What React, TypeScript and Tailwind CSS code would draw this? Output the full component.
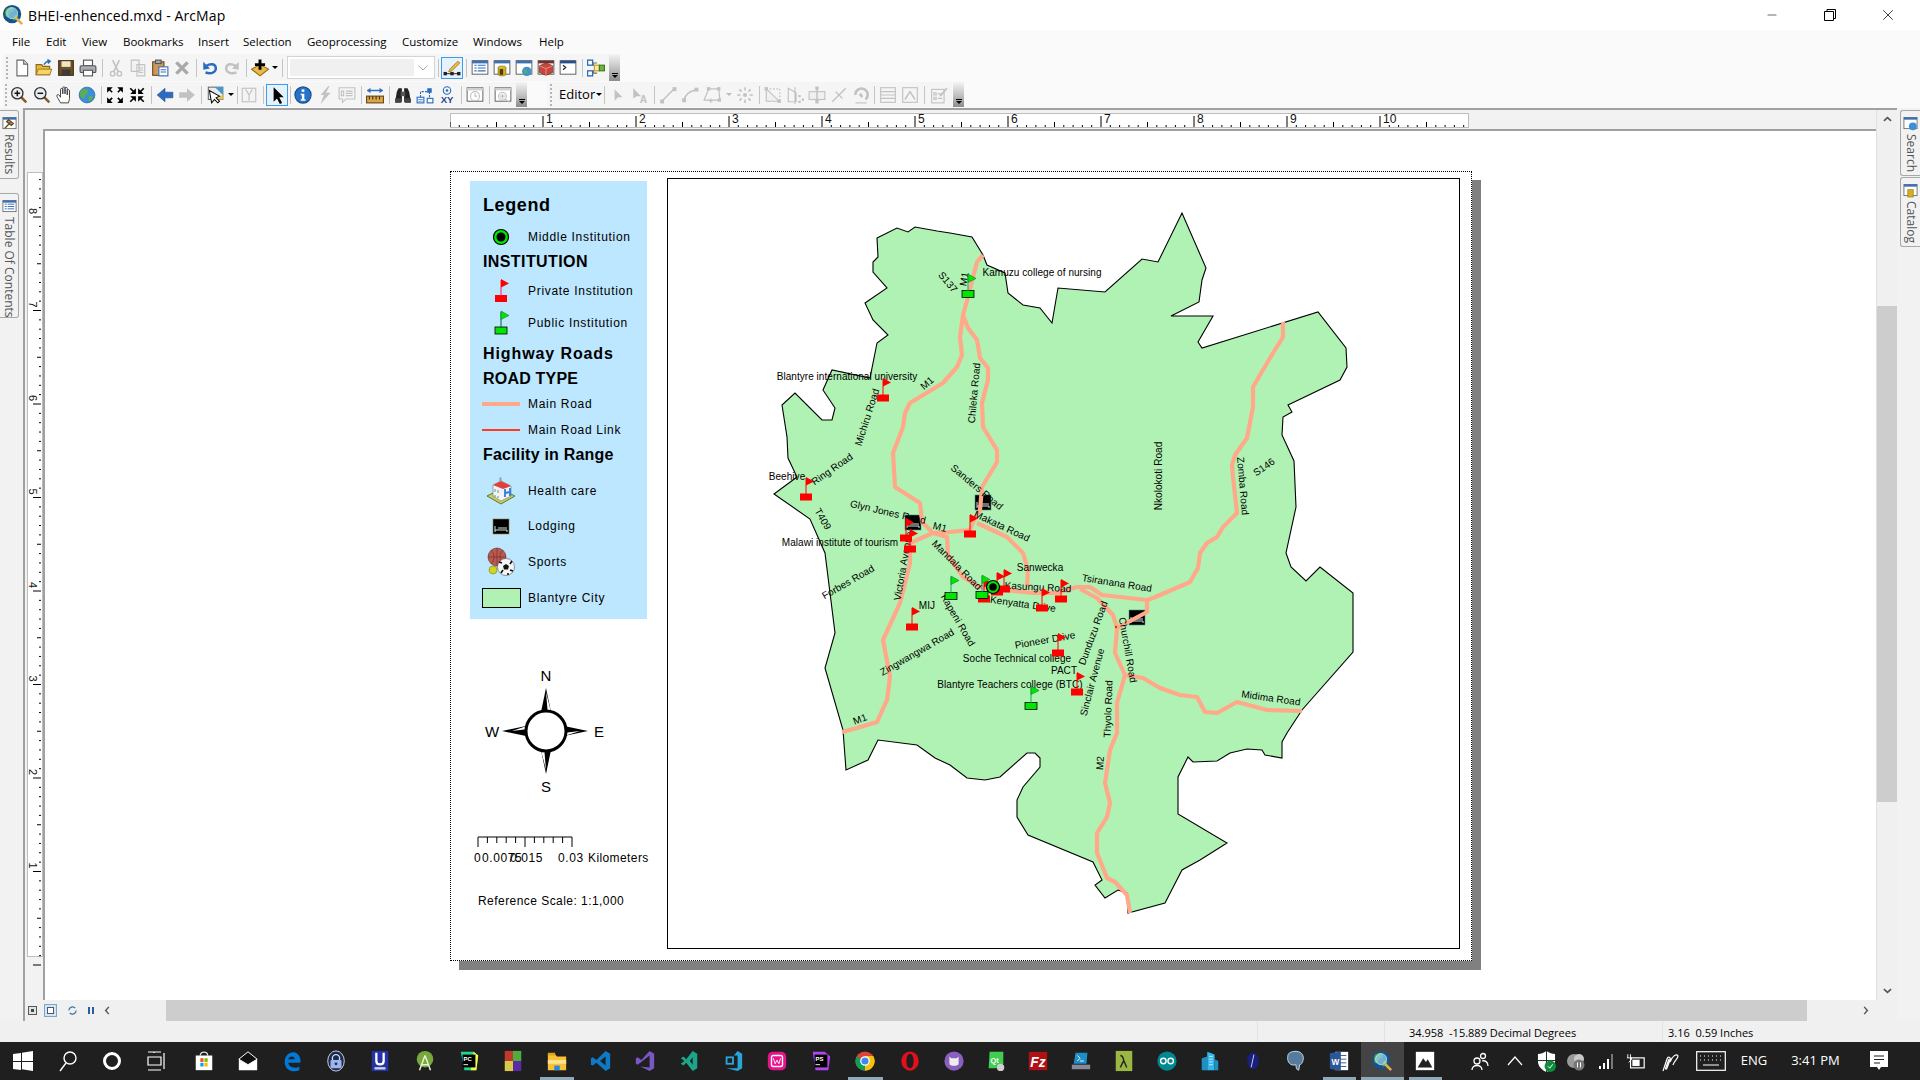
import type { ReactNode } from "react";
import { Minus, X } from "lucide-react";

const LIB = "font-['Liberation_Sans',sans-serif]";

// ---------- toolbar bits ----------
const Grip = ({ w }: { w: string }) => (
  <div className={`${w} flex flex-col items-center justify-center gap-[2px]`}>
    {[0, 1, 2, 3, 4, 5].map((i) => (
      <div key={i} className="w-[2px] h-[2px] bg-[#b4b4b4]" />
    ))}
  </div>
);

const Sep = ({ w = "w-[6px]" }: { w?: string }) => (
  <div className={`${w} h-full flex justify-center items-center`}>
    <div className="w-px h-[18px] bg-[#c4c4c4]" />
  </div>
);

const Overflow = () => (
  <div className="w-[11px] h-full bg-linear-to-b from-[#f4f4f4] via-[#c4c4c4] to-[#8c8c8c] flex flex-col items-center justify-end pb-[3px] gap-px">
    <div className="w-[6px] h-px bg-black" />
    <div className="w-0 h-0 border-x-[3px] border-x-transparent border-t-[3px] border-t-black" />
  </div>
);

const Caret = ({ c = "#000", w = "w-[10px]" }: { c?: string; w?: string }) => (
  <div className={`${w} flex justify-center`}>
    <div className="w-0 h-0 border-x-[3px] border-x-transparent border-t-[3px]" style={{ borderTopColor: c }} />
  </div>
);

const Btn = ({ children, on }: { children: ReactNode; on?: boolean }) => (
  <div
    className={`w-[22px] h-[22px] flex items-center justify-center shrink-0 ${
      on ? "border border-[#3c9bea] bg-[#e6f2fb]" : ""
    }`}
  >
    <svg viewBox="0 0 16 16" className="w-[18px] h-[18px]">
      {children}
    </svg>
  </div>
);

const G = "#c2c2c2";

const Win = ({ children, bar = "#3d6fb4" }: { children?: ReactNode; bar?: string }) => (
  <>
    <rect x="1" y="1.5" width="14" height="12" fill="#fff" stroke="#555" strokeWidth="0.8" />
    <rect x="1" y="1.5" width="14" height="2.4" fill={bar} />
    {children}
  </>
);

const Lens = ({ sign }: { sign: "+" | "-" }) => (
  <>
    <line x1="10" y1="10" x2="14.5" y2="14.5" stroke="#8a5a2c" strokeWidth="2.2" />
    <circle cx="6.5" cy="6.5" r="5" fill="#e9eef3" stroke="#333" strokeWidth="1.2" />
    <path d={sign === "+" ? "M4 6.5h5M6.5 4v5" : "M4 6.5h5"} stroke="#111" strokeWidth="1.3" />
  </>
);

// ---------- map symbols ----------
const FLAG_R = "#ff0000";
const FLAG_G = "#00e600";

const Flag = ({ x, y, c = FLAG_R }: { x: number; y: number; c?: string }) => {
  const stroke = c === FLAG_G ? "#000" : "#ff0000";
  return (
    <g>
      <rect x={x - 6} y={y - 3.5} width="12" height="7" fill={c} stroke={c === FLAG_G ? "#000" : "none"} strokeWidth="0.8" />
      <line x1={x} y1={y - 3} x2={x} y2={y - 19} stroke={c === FLAG_G ? "#1a6" : stroke} strokeWidth="1" />
      <path d={`M${x} ${y - 20}L${x + 8} ${y - 15.5}L${x} ${y - 11.5}Z`} fill={c} stroke={c === FLAG_G ? "#063" : "none"} strokeWidth="0.5" />
    </g>
  );
};

const Lodging = ({ x, y }: { x: number; y: number }) => (
  <g>
    <rect x={x - 8} y={y - 8} width="16" height="15" fill="#000" stroke="#4f8f8f" strokeWidth="0.6" />
    <path d={`M${x - 6} ${y - 1}v6M${x - 6} ${y + 3}h12v2M${x - 3} ${y + 1}h9`} stroke="#cfe8e0" strokeWidth="1" fill="none" />
  </g>
);

const CITY =
  "877,238 897,228 908,232 915,227 937,231 950,233 972,237 983,255 987,265 1005,273 1008,293 1023,305 1040,308 1052,323 1058,288 1105,292 1142,259 1158,262 1182,213 1206,268 1202,280 1199,302 1171,316 1213,316 1198,342 1202,348 1318,312 1346,348 1347,367 1340,380 1288,405 1292,412 1283,417 1282,435 1294,461 1296,507 1286,553 1291,567 1306,581 1320,567 1353,593 1353,652 1302,710 1287,733 1282,742 1282,758 1265,755 1262,750 1247,749 1230,753 1217,761 1193,762 1188,757 1178,777 1178,814 1227,843 1200,860 1182,870 1165,903 1128,913 1127,893 1118,890 1105,898 1095,885 1102,880 1093,862 1028,835 1017,817 1017,800 1023,787 1040,767 1040,758 1035,753 1027,753 1000,777 985,780 967,778 950,765 935,758 917,745 878,740 868,760 846,770 843,730 825,668 835,633 825,553 810,519 774,494 797,477 788,458 787,437 782,405 795,393 822,420 832,420 835,408 823,390 832,370 870,378 877,343 888,335 873,320 865,303 887,288 873,272 873,262 878,257";

const ROADS = [
  "983,255 977,262 973,277 968,297 963,315 960,337 962,355 957,367 943,383 910,403 905,413 903,427 893,453 895,487 920,503 922,522 933,533 910,543 910,563 900,603 883,640 890,677 887,700 877,722 857,728 842,732",
  "963,315 968,328 977,340 980,358 988,368 988,380 982,403 983,427 997,450 997,462 982,487 980,510 973,522 970,530 950,532 933,533",
  "977,523 1007,537 1023,553 1028,570 1027,587",
  "933,533 947,537 948,555 963,577 980,587 1033,593 1057,593 1077,587 1090,587 1102,595 1147,600 1153,598 1190,582 1198,568 1200,553 1207,543 1217,537 1223,527 1237,513 1233,477 1232,465 1235,455 1247,438 1253,407 1253,387 1273,353 1283,337 1283,322",
  "1147,600 1147,612 1117,628",
  "1080,589 1097,598 1113,615 1117,628 1115,653 1125,675 1143,678 1160,688 1180,695 1197,697 1205,712 1217,713 1237,702 1267,710 1302,711",
  "1125,675 1117,703 1117,733 1110,750 1105,783 1110,803 1107,817 1097,833 1097,853 1107,878 1115,882 1127,895 1130,913",
];

const LABELS: [string, number, number, number][] = [
  ["Kamuzu college of nursing", 1042, 272, 0],
  ["S137", 948, 282, 50],
  ["M1", 964, 279, -80],
  ["Blantyre international university", 847, 376, 0],
  ["M1", 927, 383, -40],
  ["Michiru Road", 867, 417, -72],
  ["Chileka Road", 974, 393, -85],
  ["Beehive", 787, 476, 0],
  ["Ring Road", 832, 469, -35],
  ["T409", 823, 519, 60],
  ["Glyn Jones Road", 888, 512, 13],
  ["M1", 940, 527, 15],
  ["Sanders Road", 977, 487, 40],
  ["Makata Road", 1002, 526, 25],
  ["Malawi institute of tourism", 840, 542, 0],
  ["Forbes Road", 848, 582, -30],
  ["Victoria Avenue", 903, 566, -80],
  ["Mandala Road", 957, 565, 45],
  ["MIJ", 927, 605, 0],
  ["Sanwecka", 1040, 567, 0],
  ["Kasungu Road", 1038, 587, 3],
  ["Kenyatta Drive", 1023, 604, 8],
  ["Tsiranana Road", 1117, 583, 9],
  ["Kapeni Road", 958, 620, 60],
  ["Zingwangwa Road", 917, 652, -30],
  ["Pioneer Drive", 1045, 640, -10],
  ["Soche Technical college", 1017, 658, 0],
  ["PACT", 1064, 670, 0],
  ["Blantyre Teachers college (BTC)", 1010, 684, 0],
  ["Dunduzu Road", 1093, 633, -70],
  ["Sinclair Avenue", 1092, 682, -75],
  ["Churchill Road", 1128, 650, 80],
  ["Thyolo Road", 1108, 709, -88],
  ["M1", 860, 719, -20],
  ["M2", 1100, 763, -85],
  ["Midima Road", 1271, 698, 8],
  ["Zomba Road", 1243, 486, 85],
  ["S146", 1264, 467, -35],
  ["Nkolokoti Road", 1158, 476, -90],
];

const RED_FLAGS = [
  [883, 398], [806, 497], [970, 534], [906, 538], [910, 549], [912, 627], [984, 599], [1004, 589],
  [997, 592], [1042, 608], [1061, 599], [1058, 653], [1077, 692],
];
const GREEN_FLAGS = [[968, 294], [951, 596], [982, 595], [1031, 706]];

const CityMap = () => (
  <svg viewBox="668 179 791 769" className={`w-[791px] h-[769px] block ${LIB}`}>
    <polygon points={CITY} fill="#b0f2b3" stroke="#000" strokeWidth="1.1" />
    <Lodging x={983} y={503} />
    <Lodging x={913} y={523} />
    <Lodging x={1137} y={618} />
    {ROADS.map((r, i) => (
      <polyline key={i} points={r} fill="none" stroke="#ffa98a" strokeWidth="4.2" strokeLinejoin="round" />
    ))}
    <circle cx="1116" cy="627" r="1.2" fill="#ff2a00" />
    {LABELS.map(([t, x, y, a], i) => (
      <text
        key={i}
        x={x}
        y={y + 3.5}
        fontSize="10"
        letterSpacing="0.05"
        textAnchor="middle"
        fill="#000"
        transform={a ? `rotate(${a} ${x} ${y})` : undefined}
      >
        {t}
      </text>
    ))}
    {RED_FLAGS.map(([x, y], i) => (
      <Flag key={i} x={x} y={y} />
    ))}
    {GREEN_FLAGS.map(([x, y], i) => (
      <Flag key={i} x={x} y={y} c={FLAG_G} />
    ))}
    <circle cx="993" cy="587" r="6.5" fill="#00e600" stroke="#000" strokeWidth="1.2" />
    <circle cx="993" cy="587" r="3.8" fill="#000" />
  </svg>
);

// ---------- legend ----------
const SmallIcon = ({ children }: { children: ReactNode }) => (
  <svg viewBox="0 0 30 30" className="w-[30px] h-[30px] overflow-visible">
    {children}
  </svg>
);

const legendRows: { label: string; cls: string; mt: string; wide?: boolean; icon?: ReactNode }[] = [
  { label: "Legend", cls: "text-[18px] font-bold tracking-[0.6px]", mt: "mt-0" },
  {
    label: "Middle Institution",
    cls: "",
    mt: "mt-[12px]",
    icon: (
      <SmallIcon>
        <circle cx="15" cy="15" r="7.5" fill="#00e600" stroke="#000" strokeWidth="1.2" />
        <circle cx="15" cy="15" r="4.5" fill="#000" />
      </SmallIcon>
    ),
  },
  { label: "INSTITUTION", cls: "text-[16px] font-bold tracking-[0.4px]", mt: "mt-[5px]" },
  {
    label: "Private Institution",
    cls: "",
    mt: "mt-[9px]",
    icon: (
      <SmallIcon>
        <rect x="9" y="19" width="12" height="7" fill={FLAG_R} />
        <line x1="15" y1="20" x2="15" y2="4" stroke="#ff2050" strokeWidth="1" />
        <path d="M15 3l8 4.5-8 4z" fill={FLAG_R} />
      </SmallIcon>
    ),
  },
  {
    label: "Public Institution",
    cls: "",
    mt: "mt-[12px]",
    icon: (
      <SmallIcon>
        <rect x="9" y="19" width="12" height="7" fill={FLAG_G} stroke="#000" strokeWidth="0.8" />
        <line x1="15" y1="20" x2="15" y2="4" stroke="#063" strokeWidth="1" />
        <path d="M15 3l8 4.5-8 4z" fill={FLAG_G} stroke="#063" strokeWidth="0.5" />
      </SmallIcon>
    ),
  },
  { label: "Highway Roads", cls: "text-[16px] font-bold tracking-[0.9px]", mt: "mt-[11px]" },
  { label: "ROAD TYPE", cls: "text-[16px] font-bold tracking-[0.2px]", mt: "mt-[5px]" },
  {
    label: "Main Road",
    cls: "",
    mt: "mt-[5px]",
    wide: true,
    icon: <div className="w-[38px] h-[4px] -ml-[1px] bg-[#ffa98a]" />,
  },
  {
    label: "Main Road Link",
    cls: "",
    mt: "mt-[6px]",
    wide: true,
    icon: <div className="w-[38px] h-[2px] -ml-[1px] bg-[#ff3a1e]" />,
  },
  { label: "Facility in Range", cls: "text-[16px] font-bold tracking-[0.2px]", mt: "mt-[5px]" },
  {
    label: "Health care",
    cls: "",
    mt: "mt-[16px]",
    icon: (
      <SmallIcon>
        <path d="M1 20l14-7 14 7-14 8z" fill="#c6cf5a" stroke="#4a5a20" strokeWidth="0.8" />
        <path d="M7 9l8-4 10 5v10l-10 5-8-5z" fill="#f3f3f3" stroke="#777" strokeWidth="0.6" />
        <path d="M7 9l8-4 10 5-8 3z" fill="#e04040" />
        <path d="M19 13v8M24 12v8M19 17l5-1" stroke="#2a7fe0" strokeWidth="1.8" />
        <path d="M9 13v3M12 14v3M9 19v2M12 20v2" stroke="#6aa" strokeWidth="1.2" />
        <rect x="13.5" y="1.5" width="2" height="4" fill="#999" />
      </SmallIcon>
    ),
  },
  {
    label: "Lodging",
    cls: "",
    mt: "mt-[15px]",
    icon: (
      <SmallIcon>
        <rect x="7" y="8" width="16" height="15" fill="#000" stroke="#9a7a3a" strokeWidth="0.6" />
        <path d="M9 15v6M9 19h12v2M12 17h9" stroke="#cfe8e0" strokeWidth="1" fill="none" />
      </SmallIcon>
    ),
  },
  {
    label: "Sports",
    cls: "",
    mt: "mt-[16px]",
    icon: (
      <SmallIcon>
        <circle cx="11" cy="10" r="9" fill="#b85a50" stroke="#6a2a28" strokeWidth="0.6" />
        <path d="M2 10h18M11 1v18M5 3c4 4 4 10 0 14M17 3c-4 4-4 10 0 14" stroke="#6a2a28" strokeWidth="0.6" fill="none" />
        <circle cx="7" cy="23" r="4" fill="#c9d820" stroke="#7a8510" strokeWidth="0.6" />
        <circle cx="20" cy="20" r="8.5" fill="#f5f5f5" stroke="#555" strokeWidth="0.6" />
        <path d="M20 17l3 2-1 3.5h-4L17 19z" fill="#111" />
        <path d="M13 15l3 1M26 14l-2 3M27 24l-3-1M15 26l2-3M22 28v-2" stroke="#111" strokeWidth="1.6" />
      </SmallIcon>
    ),
  },
  {
    label: "Blantyre City",
    cls: "",
    mt: "mt-[16px]",
    wide: true,
    icon: <div className="w-[39px] h-[20px] -ml-[1px] bg-[#b0f2b3] border border-black" />,
  },
];

const Legend = () => (
  <div className={`w-[177px] h-[438px] bg-[#bde6ff] pt-[14px] text-black ${LIB}`}>
    {legendRows.map((r) => (
      <div key={r.label} className={`h-5 flex items-center pl-[13px] ${r.mt}`}>
        {r.cls ? (
          <span className={`whitespace-nowrap ${r.cls}`}>{r.label}</span>
        ) : (
          <>
            <div className="w-[45px] shrink-0 flex items-center justify-start">
              {r.wide ? r.icon : <div className="w-[30px] h-5 ml-[3px] flex items-center justify-center">{r.icon}</div>}
            </div>
            <span className="text-[12px] tracking-[0.7px] whitespace-nowrap">{r.label}</span>
          </>
        )}
      </div>
    ))}
  </div>
);

const Compass = () => (
  <svg viewBox="470 660 177 140" className={`w-[177px] h-[140px] block ${LIB}`}>
    <path d="M546 688l-5 24h10zM546 774l-5-24h10zM502 731l24-5v10zM588 731l-24-5v10z" fill="#000" />
    <path d="M546 692l1.5 18h3zM512 731l14-1.8v-3zM580 731l-15 1.8v3zM546 770l-1.5-18h-3z" fill="#fff" />
    <circle cx="546" cy="731" r="20" fill="#fff" stroke="#000" strokeWidth="3" />
    <g fontSize="15" textAnchor="middle" fill="#000">
      <text x="546" y="681">N</text>
      <text x="546" y="792">S</text>
      <text x="492" y="737">W</text>
      <text x="599" y="737">E</text>
    </g>
  </svg>
);

const ScaleBar = () => (
  <svg viewBox="470 830 185 40" className={`w-[185px] h-[40px] block overflow-visible ${LIB}`}>
    <path d="M478 847v-10h94v10M525 837v10" fill="none" stroke="#000" strokeWidth="1" />
    {[1, 2, 3, 4, 6, 7, 8, 9].map((i) => (
      <line key={i} x1={478 + i * 9.4} y1="837" x2={478 + i * 9.4} y2="843" stroke="#000" strokeWidth="1" />
    ))}
    <g fontSize="12" fill="#000" letterSpacing="0.6">
      <text x="474" y="862">0</text>
      <text x="482" y="862">0.0075</text>
      <text x="510" y="862">0.015</text>
      <text x="558" y="862">0.03</text>
      <text x="588" y="862" letterSpacing="0.4">Kilometers</text>
    </g>
  </svg>
);

// ---------- rulers ----------
const HRuler = () => {
  const ticks = Array.from({ length: 110 }, (_, i) => i);
  return (
    <svg viewBox="0 0 1019 15" className={`w-[1019px] h-[15px] block bg-white ${LIB}`}>
      <rect x="0.5" y="0.5" width="1018" height="14" fill="#fff" stroke="#bdbdbd" />
      {ticks.map((i) => {
        const x = i * 9.3;
        const major = i % 10 === 0 && i > 0;
        const mid = i % 5 === 0;
        return <line key={i} x1={x} x2={x} y1={major ? 3 : mid ? 9 : 12} y2="14" stroke="#000" strokeWidth="1" />;
      })}
      {[1, 2, 3, 4, 5, 6, 7, 8, 9, 10].map((n) => (
        <text key={n} x={n * 93 + 3} y="10" fontSize="12" fill="#111">
          {n}
        </text>
      ))}
    </svg>
  );
};

const VRuler = () => {
  const ticks = Array.from({ length: 85 }, (_, i) => i);
  return (
    <svg viewBox="0 0 16 785" className={`w-[16px] h-[785px] block overflow-visible ${LIB}`}>
      <rect x="0.5" y="0.5" width="15" height="784" fill="#fff" stroke="#bdbdbd" />
      {ticks.map((i) => {
        const y = 45 - 9.35 * 4 + i * 9.35;
        const major = i % 10 === 4;
        const mid = i % 5 === 4;
        return <line key={i} x1={major ? 6 : mid ? 10 : 12} x2="14" y1={y} y2={y} stroke="#000" strokeWidth="1" />;
      })}
      {[8, 7, 6, 5, 4, 3, 2, 1].map((n, i) => (
        // rotate(90) puts the glyph to the right of its origin
        <text key={n} x="0" y="0" fontSize="11" fill="#111" transform={`translate(2 ${36 + i * 93.5}) rotate(90)`}>
          {n}
        </text>
      ))}
    </svg>
  );
};

// ---------- toolbars ----------
const Row1 = () => (
  <div className="h-[27px] pl-[3px] flex">
    <div className="h-full flex items-center bg-[#f5f5f5]">
      <Grip w="w-[8px]" />
      <Btn><path d="M3.5 1h6l3.5 3.5V15h-9.5z" fill="#fff" stroke="#666" /><path d="M9.5 1v3.5H13" fill="#ddd" stroke="#666" /></Btn>
      <Btn><path d="M1 5h5l1 1.5h6V14H1z" fill="#e8b93c" stroke="#8a6a1c" /><path d="M1 14l2-5h12l-2 5z" fill="#f6d565" stroke="#8a6a1c" strokeWidth="0.7" /><path d="M8 5c1-2 3-3 5-3M11 0.5l2.5 1.5-2 2" fill="none" stroke="#2b6cc0" strokeWidth="1.3" /></Btn>
      <Btn><rect x="1.5" y="1.5" width="13" height="13" fill="#6b5327" stroke="#3d2f14" /><rect x="4" y="2" width="8" height="5" fill="#f1e7c8" /><rect x="4" y="9.5" width="8" height="5" fill="#3c3c3c" /></Btn>
      <Btn><rect x="4" y="1" width="8" height="5" fill="#fff" stroke="#555" /><rect x="1" y="6" width="14" height="6" rx="1" fill="#a9adb2" stroke="#555" /><rect x="4" y="10" width="8" height="5" fill="#fff" stroke="#555" /></Btn>
      <Sep />
      <Btn><circle cx="5" cy="13" r="2" fill="none" stroke={G} strokeWidth="1.3" /><circle cx="11" cy="13" r="2" fill="none" stroke={G} strokeWidth="1.3" /><path d="M6 11.3L11 1M10 11.3L5 1" stroke={G} strokeWidth="1.4" /></Btn>
      <Btn><path d="M2 1h7v10H2zM7 5h7v10H7z" fill="#f2f2f2" stroke={G} /><path d="M8.5 8h4M8.5 10h4M8.5 12h4" stroke={G} /></Btn>
      <Btn><rect x="1.5" y="2.5" width="10" height="12" fill="#c99a5a" stroke="#6b4a1c" /><rect x="4" y="1" width="5" height="3" fill="#aaa" stroke="#555" /><rect x="7" y="7" width="8" height="8" fill="#fff" stroke="#3d6fb4" /><path d="M8.5 9.5h5M8.5 11.5h5" stroke="#3d6fb4" /></Btn>
      <Btn><path d="M3 3l10 10M13 3L3 13" stroke="#a9a9a9" strokeWidth="3" /></Btn>
      <Sep />
      <Btn><path d="M4 12c6 2 10-1 9-5-1-3-5-3-8-1" fill="none" stroke="#2b6cc0" strokeWidth="2.2" /><path d="M2 2.5v7l6-1z" fill="#2b6cc0" /></Btn>
      <Btn><path d="M12 12c-6 2-10-1-9-5 1-3 5-3 8-1" fill="none" stroke={G} strokeWidth="2.2" /><path d="M14 2.5v7l-6-1z" fill={G} /></Btn>
      <Sep />
      <Btn><path d="M0.5 9l7.5-4 7.5 4L8 15z" fill="#e9b949" stroke="#9a6b10" /><path d="M8 0.5v9M3.5 5h9" stroke="#000" strokeWidth="2.6" /></Btn>
      <Caret w="w-[8px]" />
      <Sep />
      <div className="w-[2px]" />
      <div className="w-[148px] h-[23px] bg-white border border-[#d4d4d4] flex items-center p-[2px] shrink-0">
        <div className="flex-1 h-full bg-[#f0f0f0]" />
        <svg viewBox="0 0 10 6" className="w-[10px] h-[6px] mx-[4px]"><path d="M0.5 0.5l4.5 4.5 4.5-4.5" fill="none" stroke="#aaa" /></svg>
      </div>
      <Sep />
      <Btn on><path d="M1 13h14" stroke="#444" /><rect x="0.5" y="11.5" width="3" height="3" fill="#222" /><rect x="6.5" y="11.5" width="3" height="3" fill="#222" /><rect x="12.5" y="11.5" width="3" height="3" fill="#222" /><path d="M6 9l7-7 2 1.5-7 7-3 1z" fill="#e8b93c" stroke="#96662a" strokeWidth="0.6" /></Btn>
      <Sep />
      <Btn><Win><path d="M3 5.5h2M6 5.5h7M3 8h2M6 8h7M3 10.5h2M6 10.5h7" stroke="#2b6cc0" /></Win></Btn>
      <Btn><Win><ellipse cx="8" cy="7.5" rx="3.5" ry="1.3" fill="#e8c83c" stroke="#6b5a10" strokeWidth="0.5" /><path d="M4.5 7.5v6c0 2 7 2 7 0v-6" fill="#d6ae1e" stroke="#6b5a10" strokeWidth="0.5" /><rect x="6" y="9" width="3" height="5" fill="#4a3a0a" /></Win></Btn>
      <Btn><Win><circle cx="10.5" cy="11" r="4.2" fill="#3e8fd9" /><path d="M8 9.5c2-1 3 0 3 2s-2 2-2.5 0zM12 8.5l2 2-1 1z" fill="#5ab04a" /></Win></Btn>
      <Btn><Win bar="#703030"><path d="M2 6l6-2.5L14 6v6l-6 2.5L2 12z" fill="#c8453c" stroke="#742420" strokeWidth="0.6" /><path d="M2 6l6 2.5L14 6M8 8.5v6" stroke="#f0b0a0" strokeWidth="0.6" fill="none" /></Win></Btn>
      <Btn><Win bar="#2b4f8c"><path d="M3.5 5.5l2.5 2-2.5 2" fill="none" stroke="#222" /></Win></Btn>
      <Sep />
      <Btn><path d="M5 3.5h4M5 12.5h4M9 8H7.5L5 3.5M7.5 8L5 12.5" stroke="#8a6a1c" fill="none" /><rect x="0.5" y="1" width="4.5" height="4.5" fill="#fff" stroke="#2b6cc0" strokeWidth="1.2" /><rect x="0.5" y="10.5" width="4.5" height="4.5" fill="#fff" stroke="#2b6cc0" strokeWidth="1.2" /><rect x="6.5" y="5.5" width="4.5" height="5" fill="#f6e9b0" stroke="#c2a020" /><rect x="11" y="5.5" width="4.5" height="5" fill="#6cb440" stroke="#3d7a1c" /></Btn>
      <div className="w-[2px]" />
      <Overflow />
    </div>
  </div>
);

const Row2 = () => (
  <div className="h-[25px] mt-px pl-[3px] flex">
    <div className="h-full flex items-center bg-[#f5f5f5]">
      <Grip w="w-[5px]" />
      <Btn><Lens sign="+" /></Btn>
      <div className="w-px" />
      <Btn><Lens sign="-" /></Btn>
      <div className="w-px" />
      <Btn><path d="M4 15c-2-4-4-6-3-7s2 0 3 2V3c0-1 2-1 2 0v4V1.5c0-1 2-1 2 0V7V2c0-1 2-1 2 0v6V4c0-1 2-1 2 0v7c0 2-1 3-1 4z" fill="#fff" stroke="#333" strokeWidth="0.8" /></Btn>
      <Btn><circle cx="8" cy="8" r="7" fill="#3e8fd9" stroke="#1e5a9c" strokeWidth="0.6" /><path d="M4 3c3-1 5 0 5 2s-3 2-3 4-2 3-3 1-2-5 1-7zM10 9c2-1 4 0 3 2s-3 3-4 1z" fill="#5ab04a" /></Btn>
      <Sep w="w-[6px]" />
      <Btn><path d="M1 1l5 0-2 2 2 2-1 1-2-2-2 2zM15 1h-5l2 2-2 2 1 1 2-2 2 2zM1 15h5l-2-2 2-2-1-1-2 2-2-2zM15 15h-5l2-2-2-2 1-1 2 2 2-2z" fill="#000" transform="translate(16 0) scale(-1 1)" /></Btn>
      <Btn><path d="M7 7H2l2-2-2.5-2.5 1-1L5 4l2-2zM9 7h5l-2-2 2.5-2.5-1-1L11 4 9 2zM7 9H2l2 2-2.5 2.5 1 1L5 12l2 2zM9 9h5l-2 2 2.5 2.5-1 1L11 12l-2 2z" fill="#000" transform="rotate(180 8 8)" /></Btn>
      <Sep />
      <Btn><path d="M1 8l7-6v3.5h7v5H8V14z" fill="#2b6cc0" stroke="#1a4a8c" strokeWidth="0.5" /></Btn>
      <Btn><path d="M15 8L8 2v3.5H1v5h7V14z" fill={G} /></Btn>
      <Sep />
      <Btn><rect x="2" y="1" width="13" height="11" fill="#e8ecef" stroke="#555" strokeWidth="0.8" /><path d="M8 1h7v7z" fill="#3d9ad9" /><path d="M10 12l5-5v5z" fill="#e8c83c" /><path d="M3 4l2 11 2.5-3 3 3 1.5-1.5-3-3 3-1.5z" fill="#fff" stroke="#000" strokeWidth="0.9" /></Btn>
      <Caret />
      <Sep w="w-[2px]" />
      <Btn><rect x="2" y="2" width="12" height="12" fill="#f4f4f4" stroke={G} /><path d="M5 3l3 5 3-5M8 8v5" stroke={G} fill="none" /></Btn>
      <Sep w="w-[6px]" />
      <Btn on><path d="M5 1v13l3-3 2.5 5 2-1-2.5-5H14z" fill="#000" /></Btn>
      <Sep w="w-[4px]" />
      <Btn><circle cx="8" cy="8" r="7.2" fill="#2773c7" stroke="#174d8c" /><rect x="6.8" y="3" width="2.4" height="2.2" fill="#fff" /><path d="M6 6.8h3.2v5h1v1.4H6v-1.4h1v-3.6H6z" fill="#fff" /></Btn>
      <Btn><path d="M11 0L4 8h3L4 16l9-10H9l3-6z" fill={G} /></Btn>
      <Btn><path d="M1 1.5h14v10H7l-3 3v-3H1z" fill="#f5f5f5" stroke={G} /><path d="M7 4.5h6M7 6.5h6M7 8.5h6M3 4.5h2v4H3z" stroke={G} fill="none" /></Btn>
      <Sep />
      <Btn><path d="M1 4h14" stroke="#2b6cc0" strokeWidth="1.3" /><path d="M1 4l3-2.5v5zM15 4l-3-2.5v5z" fill="#2b6cc0" /><rect x="0.5" y="9" width="15" height="6" fill="#d9a648" stroke="#6b4a1c" /><path d="M3 9v3M6 9v3M9 9v3M12 9v3" stroke="#4d3410" /></Btn>
      <Sep />
      <Btn><path d="M1 14l1.5-9L4 2h3v12zM15 14l-1.5-9L12 2H9v12z" fill="#222" /><rect x="6" y="5" width="4" height="4" fill="#555" /><rect x="1" y="11" width="5.5" height="4" fill="#444" /><rect x="9.5" y="11" width="5.5" height="4" fill="#444" /></Btn>
      <Btn><path d="M4 13V5h8M12 5v8" fill="none" stroke="#2b6cc0" strokeDasharray="2 1" /><rect x="1" y="10" width="6" height="5" fill="#fff" stroke="#2b6cc0" /><path d="M2 12h4M2 13.5h4" stroke="#2b6cc0" strokeWidth="0.6" /><rect x="10" y="11" width="5" height="4" fill="#fff" stroke="#2b6cc0" /><rect x="10" y="2" width="4" height="4" fill="#2b6cc0" /></Btn>
      <Btn><circle cx="8" cy="4" r="3.3" fill="none" stroke="#2b6cc0" /><circle cx="8" cy="4" r="1.2" fill="#2b6cc0" /><text x="8" y="15" fontSize="8.5" fontWeight="700" textAnchor="middle" fill="#1a4a8c" className={LIB}>XY</text></Btn>
      <Sep />
      <Btn><Win bar="#cfcfcf"><circle cx="8" cy="9" r="4" fill="none" stroke={G} /><path d="M8 6.5V9h2" stroke={G} fill="none" /></Win></Btn>
      <Sep />
      <Btn><Win bar="#cfcfcf"><circle cx="7.5" cy="9" r="3.5" fill="#f4f4f4" stroke={G} /><path d="M5.5 9h4M7.5 7v4M10 11.5l3.5 3" stroke={G} /></Win></Btn>
      <div className="w-[2px]" />
      <Overflow />
    </div>
    <div className="ml-[20px] h-full flex items-center bg-[#f5f5f5]">
      <Grip w="w-[8px]" />
      <div className="w-[47px] flex items-center text-[13px] text-black pl-[4px]">
        <span>Editor</span>
        <Caret w="w-[10px]" />
      </div>
      <Sep w="w-[5px]" />
      <Btn><path d="M5 3v10l3-3h4z" fill={G} /></Btn>
      <Btn><path d="M2 2v9l3-2 4 0z" fill={G} /><text x="11" y="15" fontSize="9" fontWeight="700" textAnchor="middle" fill={G} className={LIB}>A</text></Btn>
      <Sep />
      <Btn><path d="M2.5 13.5l11-11" stroke={G} strokeWidth="1.3" /><rect x="1" y="12" width="3.5" height="3.5" fill={G} /><rect x="12" y="1" width="3.5" height="3.5" fill={G} /></Btn>
      <Btn><path d="M2.5 13.5c1-6 4-9 11-10" fill="none" stroke={G} strokeWidth="1.3" /><rect x="1" y="11" width="3.5" height="3.5" fill={G} /><rect x="12" y="1.5" width="3.5" height="3.5" fill={G} /></Btn>
      <Btn><path d="M5 2.5h9l1 10H1z" fill="none" stroke={G} strokeWidth="1.1" /><rect x="3.5" y="1" width="3" height="3" fill={G} /><rect x="12.5" y="1" width="3" height="3" fill={G} /><rect x="13" y="11" width="3" height="3" fill={G} /><path d="M7 11v4M5 13h4" stroke={G} /></Btn>
      <div className="w-[11px]"><Caret c="#bcbcbc" w="w-[11px]" /></div>
      <Btn><path d="M8 1v3M8 12v3M1 8h3M12 8h3M3 3l2 2M13 3l-2 2M3 13l2-2M13 13l-2-2" stroke={G} strokeWidth="1.4" /><circle cx="8" cy="8" r="1.8" fill={G} /></Btn>
      <Sep />
      <Btn><path d="M2 2.5v11h11.5z" fill="#f0f0f0" stroke={G} /><path d="M2 2.5h12v10" fill="none" stroke={G} strokeDasharray="1.5 1.5" /><rect x="0.5" y="1" width="3" height="3" fill={G} /><rect x="12" y="12" width="3" height="3" fill={G} /></Btn>
      <Btn><path d="M2 2v12h7V6zM8 1v15" fill="none" stroke={G} /><path d="M11 8h2v2h-2zM11 13h2v2h-2zM14 11h2v2h-2z" fill={G} /></Btn>
      <Btn><rect x="1" y="5" width="14" height="7" fill="#f0f0f0" stroke={G} /><path d="M8 1v14" stroke={G} strokeWidth="1.3" /><rect x="6.5" y="0.5" width="3" height="3" fill={G} /><rect x="6.5" y="12.5" width="3" height="3" fill={G} /></Btn>
      <Btn><path d="M2 14L14 2M5 5l6 6" stroke={G} strokeWidth="1.2" /></Btn>
      <Btn><path d="M3 8a5.5 5.5 0 1 1 9 4" fill="none" stroke={G} strokeWidth="2.2" /><path d="M6 8l2-2 2 3-1.5 1.5z" fill={G} /><path d="M3 15h10" stroke={G} /></Btn>
      <Sep w="w-[5px]" />
      <Btn><rect x="1.5" y="1.5" width="13" height="13" fill="#f5f5f5" stroke={G} /><path d="M1.5 5h13M1.5 8h13M1.5 11h13" stroke={G} /></Btn>
      <Btn><rect x="1.5" y="1.5" width="13" height="13" fill="#f5f5f5" stroke={G} /><path d="M3.5 12l4.5-7 4.5 7" fill="none" stroke={G} strokeWidth="1.3" /></Btn>
      <Sep w="w-[7px]" />
      <Btn><rect x="1.5" y="3" width="11" height="12" fill="#f5f5f5" stroke={G} /><path d="M3.5 6h2v2h-2zM3.5 10h2v2h-2zM7 7h4M7 11h4" stroke={G} fill="none" /><path d="M9 9l6-7" stroke={G} strokeWidth="1.6" /></Btn>
      <div className="w-[2px]" />
    </div>
    <div className="ml-px h-full"><Overflow /></div>
  </div>
);

// ---------- side tabs ----------
const SideTab = ({ label, cls, icon }: { label: string; cls: string; icon: ReactNode }) => (
  <div className={`flex flex-col items-center pt-[5px] bg-[#f2f2f2] border border-[#a8a8a8] ${cls}`}>
    <svg viewBox="0 0 16 16" className="w-[15px] h-[15px] shrink-0">{icon}</svg>
    <span className="mt-[3px] [writing-mode:vertical-rl] text-[12px] text-[#555] whitespace-nowrap font-['Open_Sans',sans-serif] leading-[16px]">
      {label}
    </span>
  </div>
);

const winIcon = (inner: ReactNode) => <Win>{inner}</Win>;

// ---------- taskbar ----------
const tb = (k: string, node: ReactNode, under?: boolean, hi?: boolean) => ({ k, node, under, hi });

const TaskSvg = ({ children }: { children: ReactNode }) => (
  <svg viewBox="0 0 24 24" className="w-[22px] h-[22px]">{children}</svg>
);

const ARC = (
  <TaskSvg>
    <circle cx="11" cy="11" r="10" fill="#16538c" />
    <path d="M5 5c4-3 8-2 8 1s-5 3-5 6-3 3-4 1-1-6 1-8zM14 12c3-1 5 0 3 3s-4 4-5 2z" fill="#57a548" />
    <circle cx="11" cy="10" r="6" fill="#8fd0ee" opacity="0.75" stroke="#dff" strokeWidth="1" />
    <path d="M15 15l7 7" stroke="#e0ad55" strokeWidth="2.8" />
  </TaskSvg>
);

const apps = [
  tb("store", <TaskSvg><path d="M8 6c0-5 8-5 8 0" fill="none" stroke="#ddd" strokeWidth="1.4" /><rect x="3" y="6" width="18" height="16" fill="#fff" /><rect x="8" y="9" width="3.5" height="4" fill="#f25022" /><rect x="12.5" y="9" width="3.5" height="4" fill="#7fba00" /><rect x="8" y="14" width="3.5" height="4" fill="#00a4ef" /><rect x="12.5" y="14" width="3.5" height="4" fill="#ffb900" /></TaskSvg>),
  tb("mail", <TaskSvg><path d="M2 10l10-8 10 8v12H2z" fill="#fff" /><path d="M2 10l10 6 10-6-10-8z" fill="#111" stroke="#fff" /></TaskSvg>),
  tb("edge", <TaskSvg><path d="M21 14H8c0 5 8 7 12 4v4c-7 3-16 0-16-9C4 5 11 1 16 3c4 2 6 6 5 11zM15 10c0-4-6-4-7 0z" fill="#0078d7" /></TaskSvg>),
  tb("lock", <TaskSvg><ellipse cx="12" cy="12" rx="9" ry="11" fill="#1a2a55" stroke="#ddd" /><circle cx="12" cy="9" r="4" fill="none" stroke="#cfd8f0" strokeWidth="1.5" /><rect x="6" y="11" width="12" height="9" rx="1" fill="#9fb4e8" /><circle cx="12" cy="15" r="1.5" fill="#1a2a55" /></TaskSvg>),
  tb("ultra", <TaskSvg><rect x="3" y="1" width="18" height="22" fill="#2632a8" /><path d="M8 3v9c0 5 8 5 8 0V3" fill="none" stroke="#fff" strokeWidth="2.5" /><path d="M6 20h12" stroke="#cfd8f0" strokeWidth="2.5" /></TaskSvg>),
  tb("android", <TaskSvg><circle cx="12" cy="10" r="9" fill="#78a83c" /><path d="M12 6l-6 16M12 6l6 16M8 16h8" stroke="#e8f0d8" strokeWidth="1.6" fill="none" /></TaskSvg>),
  tb("pycharm", <TaskSvg><path d="M3 2h14l5 4-2 16H7z" fill="#21d789" /><path d="M17 2l5 4-2 16h-6z" fill="#fcf84a" /><rect x="5" y="5" width="14" height="14" fill="#000" /><text x="6" y="12" fontSize="6.5" fontWeight="700" fill="#fff" className={LIB}>PC</text><path d="M6 16h5" stroke="#fff" /></TaskSvg>),
  tb("winmix", <TaskSvg><rect x="3" y="1" width="9" height="11" fill="#c0392b" /><rect x="12" y="1" width="9" height="11" fill="#4cae3c" /><rect x="3" y="12" width="9" height="11" fill="#d8c94a" /><rect x="12" y="12" width="9" height="11" fill="#5b2ca0" /></TaskSvg>),
  tb("explorer", <TaskSvg><path d="M2 5h8l2 2h10v15H2z" fill="#f8c13c" /><path d="M2 3h8v3H2z" fill="#e3a21a" /><rect x="2" y="11" width="20" height="4" fill="#ffe48a" /><path d="M9 22v-5h6v5" fill="#2b88d8" /></TaskSvg>, true),
  tb("vscode", <TaskSvg><path d="M17 1l5 3v16l-5 3-10-9-4 3-2-1V9l2-1 4 3zM17 7l-6 5 6 5z" fill="#0e7ac7" /></TaskSvg>),
  tb("vs", <TaskSvg><path d="M17 1l5 3v16l-5 3-10-5 10 1V6L8 13l-4 3-2-1V9l2-1 4 3 9-10z" fill="#7a57c2" /></TaskSvg>),
  tb("vsgreen", <TaskSvg><path d="M16 1l5 3v16l-5 3-7-9-3 3-3-2 4-3-4-3 3-2 3 3zM16 8l-3 4 3 4z" fill="#1da58a" /></TaskSvg>),
  tb("blue", <TaskSvg><path d="M17 1l5 3v16l-5 3-12-3h12V6h-4" fill="#29a5d8" /><rect x="5" y="8" width="7" height="7" fill="none" stroke="#29a5d8" strokeWidth="2" /></TaskSvg>),
  tb("wamp", <TaskSvg><rect x="2" y="2" width="20" height="20" rx="5" fill="#e6138c" /><rect x="6" y="6" width="12" height="12" rx="2" fill="none" stroke="#fff" strokeWidth="1.5" /><path d="M8 9l2 6 2-4 2 4 2-6" fill="none" stroke="#fff" /></TaskSvg>),
  tb("phpstorm", <TaskSvg><path d="M3 2h13l6 5-2 15H6z" fill="#b345f1" /><rect x="5" y="5" width="14" height="14" fill="#000" /><text x="6" y="12" fontSize="6.5" fontWeight="700" fill="#fff" className={LIB}>PS</text><path d="M6 16h5" stroke="#fff" /></TaskSvg>),
  tb("chrome", <TaskSvg><circle cx="12" cy="12" r="10.5" fill="#db4437" /><path d="M12 12L2.8 7A10.5 10.5 0 0 0 12 22.5z" fill="#0f9d58" /><path d="M12 12v10.5A10.5 10.5 0 0 0 21 6.5H12z" fill="#f4c20d" /><circle cx="12" cy="12" r="4.6" fill="#4285f4" stroke="#fff" strokeWidth="1.4" /></TaskSvg>, true),
  tb("opera", <TaskSvg><ellipse cx="12" cy="12" rx="9.5" ry="10.5" fill="#e0111c" /><ellipse cx="12" cy="12" rx="4" ry="8" fill="#1e1e1e" /></TaskSvg>),
  tb("purple", <TaskSvg><circle cx="12" cy="12" r="10.5" fill="#8a5fc0" /><path d="M7 7l2 2h6l2-2v8c0 3-10 3-10 0z" fill="#eee" /></TaskSvg>),
  tb("qt", <TaskSvg><path d="M5 2h15v13l-4 5H4z" fill="#41cd52" /><text x="6" y="14" fontSize="8" fontWeight="700" fill="#fff" className={LIB}>Qt</text><circle cx="17" cy="19" r="4" fill="#cfcfcf" /></TaskSvg>),
  tb("filezilla", <TaskSvg><rect x="2" y="2" width="20" height="20" fill="#b01116" /><text x="12" y="18" fontSize="15" fontStyle="italic" fontWeight="700" textAnchor="middle" fill="#fff" className={LIB}>Fz</text></TaskSvg>),
  tb("ps", <TaskSvg><path d="M6 3h13l-1 12H4z" fill="#1d8fc7" /><path d="M8 6l3 3-3 3M11 12h4" stroke="#fff" fill="none" /><rect x="2" y="16" width="20" height="5" fill="#889" /></TaskSvg>),
  tb("lambda", <TaskSvg><rect x="3" y="1" width="18" height="22" fill="#9ab643" /><path d="M8 6c3 0 3 3 4 6l3 7M12 11l-4 8" stroke="#222" strokeWidth="1.5" fill="none" /></TaskSvg>),
  tb("arduino", <TaskSvg><circle cx="12" cy="12" r="10.5" fill="#00878f" /><circle cx="8" cy="12" r="3" fill="none" stroke="#fff" strokeWidth="1.5" /><circle cx="16" cy="12" r="3" fill="none" stroke="#fff" strokeWidth="1.5" /></TaskSvg>),
  tb("bldg", <TaskSvg><path d="M9 2l8 3v17H9z" fill="#33b8e8" /><path d="M3 9l6-2v15H3zM17 10l4 2v10h-4z" fill="#1e90c4" /><path d="M11 7h4M11 10h4M11 13h4M11 16h4" stroke="#bfeeff" /></TaskSvg>),
  tb("dark", <TaskSvg><ellipse cx="12" cy="12" rx="6.5" ry="9" fill="#1a1f7a" /><path d="M13 5l-3 14" stroke="#d8d8ff" /></TaskSvg>),
  tb("pg", <TaskSvg><path d="M5 3c6-3 14-2 15 5 0 5-2 8-4 8l-1 6c-3 0-3-4-3-6-6 2-10-3-9-9 0-2 1-3 2-4z" fill="#557c9c" stroke="#d0dce8" /></TaskSvg>),
  tb("word", <TaskSvg><rect x="8" y="2" width="14" height="20" fill="#fff" /><path d="M11 6h9M11 10h9M11 14h9M11 18h9" stroke="#2b579a" /><path d="M2 3.5l12-2v21l-12-2z" fill="#2b579a" /><text x="8" y="16" fontSize="9" fontWeight="700" textAnchor="middle" fill="#fff" className={LIB}>W</text></TaskSvg>, true),
  tb("arcmap", ARC, true, true),
  tb("photos", <TaskSvg><rect x="2" y="2" width="20" height="20" fill="#fff" /><path d="M4 19l6-10 3 4 2-3 5 9z" fill="#222" /></TaskSvg>, true),
];

const Tray = ({ w, children }: { w: string; children: ReactNode }) => (
  <div className={`${w} h-full flex items-center justify-center shrink-0`}>{children}</div>
);

const Taskbar = () => (
  <div className="h-[38px] bg-[#1f1f1f] flex items-center text-white font-['Open_Sans',sans-serif]">
    <div className="w-[46px] h-full flex items-center justify-center">
      <svg viewBox="0 0 20 20" className="w-[20px] h-[20px]"><path d="M0 3l8-1v8H0zM9 1.8L20 0v10H9zM0 11h8v8l-8-1zM9 11h11v9l-11-1.8z" fill="#fff" /></svg>
    </div>
    <div className="w-[44px] h-full flex items-center justify-center">
      <svg viewBox="0 0 22 22" className="w-[22px] h-[22px]"><circle cx="13" cy="8" r="6" fill="none" stroke="#fff" strokeWidth="1.4" /><path d="M9 13L3 21" stroke="#fff" strokeWidth="1.4" /></svg>
    </div>
    <div className="w-[44px] h-full flex items-center justify-center">
      <div className="w-[18px] h-[18px] rounded-full border-[3px] border-white" />
    </div>
    <div className="w-[44px] h-full flex items-center justify-center">
      <svg viewBox="0 0 20 20" className="w-[20px] h-[20px]"><path d="M2 1h13M8 1v1M2 19h13M2 6h13v8H2zM18 2v16" fill="none" stroke="#fff" strokeWidth="1.2" /></svg>
    </div>
    <div className="w-[4px]" />
    {apps.map((a, i) => (
      <div
        key={a.k}
        className={`relative h-full flex items-center justify-center shrink-0 ${
          i < 18 ? "w-[44.1px]" : i === 18 ? "w-[41px]" : "w-[43px]"
        } ${a.hi ? "bg-[#444]" : ""}`}
      >
        {a.node}
        {a.under && (
          <div className={`absolute bottom-0 h-[3px] bg-[#8fa9b8] ${a.hi ? "left-0 right-0" : "left-[5px] right-[5px]"}`} />
        )}
      </div>
    ))}
    <div className="flex-1" />
    <Tray w="w-[38px]">
      <svg viewBox="0 0 20 20" className="w-[20px] h-[20px]"><circle cx="8" cy="10" r="3" fill="none" stroke="#fff" strokeWidth="1.3" /><circle cx="14" cy="5" r="2.5" fill="none" stroke="#fff" strokeWidth="1.3" /><path d="M3 19c0-6 10-6 10 0M13 10c3-1 6 1 6 5" fill="none" stroke="#fff" strokeWidth="1.3" /></svg>
    </Tray>
    <Tray w="w-[34px]">
      <svg viewBox="0 0 16 10" className="w-[16px] h-[10px]"><path d="M1 9l7-8 7 8" fill="none" stroke="#fff" strokeWidth="1.2" /></svg>
    </Tray>
    <Tray w="w-[29px]">
      <svg viewBox="0 0 20 24" className="w-[19px] h-[23px]"><path d="M10 1c3 2 6 3 9 3v8c0 5-4 9-9 11-5-2-9-6-9-11V4c3 0 6-1 9-3z" fill="#fff" /><path d="M10 1v22M1 11h18" stroke="#1f1f1f" /><circle cx="14" cy="17" r="6" fill="#108a3c" /><path d="M11.5 17l2 2 3-4" stroke="#fff" fill="none" /></svg>
    </Tray>
    <Tray w="w-[29px]">
      <svg viewBox="0 0 20 20" className="w-[20px] h-[20px]"><circle cx="8" cy="10" r="7" fill="#9a9a9a" /><circle cx="13" cy="8" r="5" fill="#c8c8c8" /><circle cx="13" cy="14" r="5.5" fill="#777" /><path d="M11.5 11.5v5M14.5 11.5v5" stroke="#fff" /></svg>
    </Tray>
    <Tray w="w-[31px]">
      <svg viewBox="0 0 16 18" className="w-[16px] h-[18px]"><path d="M1 14h2v3H1zM5 11h2v6H5zM9 7h2v10H9z" fill="#fff" /><path d="M13 2h2v15h-2z" fill="#777" /></svg>
    </Tray>
    <Tray w="w-[29px]">
      <svg viewBox="0 0 22 18" className="w-[20px] h-[17px]"><rect x="5" y="5" width="15" height="11" fill="none" stroke="#fff" strokeWidth="1.3" /><rect x="7" y="7" width="8" height="7" fill="#fff" /><path d="M2 1v4M5 1v4M1 5h5v2L3 10" stroke="#fff" fill="none" /></svg>
    </Tray>
    <Tray w="w-[39px]">
      <svg viewBox="0 0 20 22" className="w-[20px] h-[22px]"><path d="M3 21L7 9c1-3 4-2 3 1l-3 8c-1 2-2 1-1-1l3-8M10 12c2-6 7-9 8-6 0 3-4 5-5 9" fill="none" stroke="#fff" strokeWidth="1.2" /></svg>
    </Tray>
    <Tray w="w-[44px]">
      <svg viewBox="0 0 30 20" className="w-[30px] h-[20px]"><rect x="0.7" y="0.7" width="28.6" height="18.6" fill="none" stroke="#fff" strokeWidth="1.2" /><path d="M4 5h1M8 5h1M12 5h1M16 5h1M20 5h1M24 5h1M4 9h1M8 9h1M12 9h1M16 9h1M20 9h1M24 9h1M7 14h16" stroke="#fff" strokeWidth="1.2" /></svg>
    </Tray>
    <Tray w="w-[42px]"><span className="text-[13px]">ENG</span></Tray>
    <Tray w="w-[81px]"><span className="text-[13px] whitespace-nowrap">3:41 PM</span></Tray>
    <Tray w="w-[46px]">
      <svg viewBox="0 0 20 22" className="w-[20px] h-[22px]"><path d="M1 1h18v16h-7l-2 3-2-3H1z" fill="#fff" /><path d="M5 6h10M5 9.5h10M5 13h6" stroke="#1f1f1f" strokeWidth="1.2" /></svg>
    </Tray>
    <div className="w-[18px]" />
  </div>
);

const menu: [string, string][] = [
  ["File", "w-[34px]"],
  ["Edit", "w-[36px]"],
  ["View", "w-[41px]"],
  ["Bookmarks", "w-[75px]"],
  ["Insert", "w-[45px]"],
  ["Selection", "w-[64px]"],
  ["Geoprocessing", "w-[95px]"],
  ["Customize", "w-[71px]"],
  ["Windows", "w-[66px]"],
  ["Help", "w-[40px]"],
];

// ---------- page ----------
export default function App() {
  return (
    <div className="w-[1920px] h-[1080px] overflow-hidden flex flex-col bg-[#fafafa] font-['Open_Sans',sans-serif] text-black">
      {/* title bar */}
      <div className="h-[30px] bg-white flex items-center">
        <div className="w-[28px] pl-[2px] shrink-0 flex">
          <svg viewBox="0 0 24 24" className="w-[22px] h-[22px]">
            <circle cx="11" cy="11" r="10" fill="#16538c" />
            <path d="M5 5c4-3 8-2 8 1s-5 3-5 6-3 3-4 1-1-6 1-8zM14 12c3-1 5 0 3 3s-4 4-5 2z" fill="#57a548" />
            <circle cx="11" cy="10" r="6" fill="#8fd0ee" opacity="0.75" stroke="#dff" strokeWidth="1" />
            <path d="M15 15l7 7" stroke="#e0ad55" strokeWidth="2.8" />
          </svg>
        </div>
        <span className="text-[14px] tracking-[0.1px] whitespace-nowrap">BHEI-enhenced.mxd - ArcMap</span>
        <div className="flex-1" />
        <div className="flex items-center pr-[3px]">
          <div className="w-[58px] flex justify-center"><Minus className="w-[14px] h-[14px]" strokeWidth={1} /></div>
          <div className="w-[58px] flex justify-center">
            <svg viewBox="0 0 12 12" className="w-[12px] h-[12px]"><path d="M0.5 2.5h9v9h-9zM3 2.5V0.5h8.5v9h-2" fill="none" stroke="#000" /></svg>
          </div>
          <div className="w-[58px] flex justify-center"><X className="w-[18px] h-[18px]" strokeWidth={1} /></div>
        </div>
      </div>

      {/* menu */}
      <div className="h-[24px] pl-[12px] flex items-center text-[11.5px]">
        {menu.map(([m, w]) => (
          <span key={m} className={w}>{m}</span>
        ))}
      </div>

      <Row1 />
      <Row2 />
      <div className="h-px" />

      {/* main */}
      <div className="h-[913px] flex bg-[#f2f2f2]">
        <div className="w-[23px] shrink-0 flex flex-col">
          <SideTab label="Results" cls="w-[19px] h-[69px] mt-[2px] border-l-0 rounded-r-[3px]" icon={winIcon(<path d="M3 13l6-6M7 4l5 4-2 2-5-4z" stroke="#6b4a1c" fill="#a9a9a9" strokeWidth="1.5" />)} />
          <SideTab label="Table Of Contents" cls="w-[19px] h-[125px] mt-[14px] border-l-0 rounded-r-[3px]" icon={winIcon(<path d="M3 5.5h2M6 5.5h7M3 8h2M6 8h7M3 10.5h2M6 10.5h7" stroke="#2b6cc0" />)} />
        </div>

        <div className="flex-1 min-w-0 flex flex-col">
          <div className="flex-1 min-h-0 flex border-t-2 border-l-2 border-[#a0a0a0]">
            <div className="flex-1 min-w-0 flex flex-col">
              {/* h ruler */}
              <div className="h-[19px] pl-[425px] pt-[3px] shrink-0">
                <HRuler />
              </div>
              <div className="flex-1 min-h-0 flex">
                <div className="w-[18px] shrink-0 pl-[2px] pt-[43px]">
                  <VRuler />
                </div>
                <div className="flex-1 min-w-0 bg-white border-t-2 border-l-2 border-[#a0a0a0] pl-[405px] pt-[40px]">
                  {/* layout page */}
                  <div className="w-[1022px] h-[790px] bg-white border border-dotted border-black shadow-[9px_9px_0_#808080] flex items-start">
                    <div className="ml-[19px] mt-[9px] w-[177px] shrink-0">
                      <Legend />
                      <div className="mt-[41px]">
                        <Compass />
                      </div>
                      <div className="mt-[30px]">
                        <ScaleBar />
                      </div>
                      <div className={`mt-[23px] ml-[8px] h-4 text-[12px] tracking-[0.45px] whitespace-nowrap leading-4 ${LIB}`}>
                        Reference Scale: 1:1,000
                      </div>
                    </div>
                    <div className="ml-[20px] mt-[6px] border border-black shrink-0">
                      <CityMap />
                    </div>
                  </div>
                </div>
              </div>
            </div>

            {/* v scrollbar */}
            <div className="w-[21px] shrink-0 bg-[#f0f0f0] border-l border-[#e0e0e0] flex flex-col items-center">
              <div className="h-[18px] flex items-center">
                <svg viewBox="0 0 10 6" className="w-[9px] h-[6px]"><path d="M1 5l4-3.5L9 5" fill="none" stroke="#555" strokeWidth="1.8" /></svg>
              </div>
              <div className="w-full h-[496px] mt-[178px] bg-[#cdcdcd]" />
              <div className="flex-1" />
              <div className="h-[18px] flex items-center">
                <svg viewBox="0 0 10 6" className="w-[9px] h-[6px]"><path d="M1 1l4 3.5L9 1" fill="none" stroke="#555" strokeWidth="1.8" /></svg>
              </div>
            </div>
          </div>

          {/* h scrollbar */}
          <div className="h-[21px] shrink-0 flex items-center bg-[#f0f0f0] border-l-2 border-[#a0a0a0]">
            <div className="w-[3px] shrink-0" />
            <div className="w-[9px] h-[9px] shrink-0 bg-[#dfe6d8] border border-[#556] flex items-center justify-center">
              <div className="w-[3px] h-[3px] bg-[#445]" />
            </div>
            <div className="w-[7px] shrink-0" />
            <div className="w-[13px] h-[13px] shrink-0 bg-[#cfe6f7] border border-[#7aa7c7] flex items-center justify-center">
              <div className="w-[7px] h-[7px] bg-white border border-[#556]" />
            </div>
            <div className="w-[10px] shrink-0" />
            <svg viewBox="0 0 12 12" className="w-[11px] h-[11px] shrink-0"><path d="M2 6a4 4 0 0 1 7-2.5M10 6a4 4 0 0 1-7 2.5" fill="none" stroke="#2b7a9c" strokeWidth="1.3" /></svg>
            <div className="w-[10px] shrink-0" />
            <div className="w-[2px] h-[7px] shrink-0 bg-[#2b5f9c]" />
            <div className="w-[2px] shrink-0" />
            <div className="w-[2px] h-[7px] shrink-0 bg-[#2b5f9c]" />
            <div className="w-[10px] shrink-0" />
            <svg viewBox="0 0 6 10" className="w-[6px] h-[9px] shrink-0"><path d="M5 1L1.5 5 5 9" fill="none" stroke="#555" strokeWidth="1.6" /></svg>
            <div className="w-[56px] shrink-0" />
            <div className="w-[1641px] shrink-0 h-full bg-[#cdcdcd]" />
            <div className="flex-1 flex justify-start pl-[56px]">
              <svg viewBox="0 0 6 10" className="w-[6px] h-[9px]"><path d="M1 1l3.5 4L1 9" fill="none" stroke="#555" strokeWidth="1.6" /></svg>
            </div>
          </div>
        </div>

        <div className="w-[23px] shrink-0 flex flex-col items-end">
          <SideTab label="Search" cls="w-[20px] h-[66px] mt-[2px] border-r-0 rounded-l-[3px]" icon={winIcon(<circle cx="10.5" cy="11" r="4.2" fill="#3e8fd9" />)} />
          <SideTab label="Catalog" cls="w-[20px] h-[70px] mt-px border-r-0 rounded-l-[3px]" icon={winIcon(<path d="M5 7h6v8H5z" fill="#d6ae1e" stroke="#6b5a10" strokeWidth="0.5" />)} />
        </div>
      </div>

      {/* status bar */}
      <div className="h-[21px] bg-[#f0f0f0] flex items-center text-[11px] text-black whitespace-nowrap">
        <div className="w-[1257px] h-full" />
        <div className="w-[127px] h-full border-l border-[#e2e2e2]" />
        <div className="w-[278px] h-full border-l border-[#e2e2e2] pl-[24px] pt-[3px] flex items-center">34.958&nbsp;&nbsp;-15.889 Decimal Degrees</div>
        <div className="flex-1 h-full border-l border-[#e2e2e2] pl-[5px] pt-[3px] flex items-center">3.16&nbsp;&nbsp;0.59 Inches</div>
      </div>

      <Taskbar />
    </div>
  );
}
